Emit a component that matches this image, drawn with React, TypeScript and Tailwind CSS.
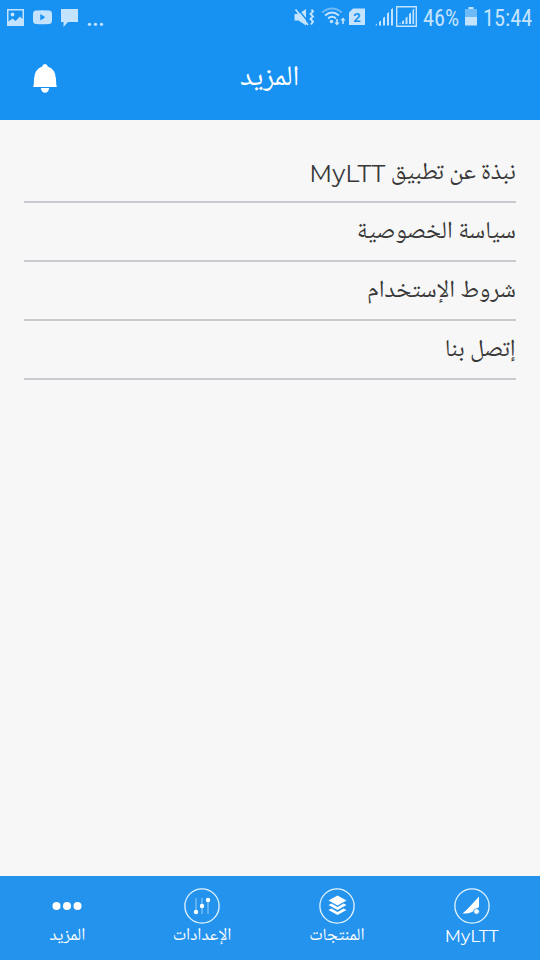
import React from "react";

const arabic = "font-['Noto_Naskh_Arabic_UI','Noto_Naskh_Arabic','DejaVu_Sans',sans-serif]";
const latin = "font-['Montserrat','Inter',sans-serif]";

function StatusBar() {
  return (
    <div dir="ltr" className="flex h-9 items-start text-[#c3e3ff]">
      <svg className="h-9 w-[110px]" viewBox="0 0 110 36" fill="currentColor">
        <path fillRule="evenodd" d="M7 9h17v17H7zM8.500 10.500v11l4-3 3 2.500 4.500-4.500 2.500 2.500v-8.500z" />
        <circle cx="12.5" cy="14.5" r="1.9" />
        <path fillRule="evenodd" d="M36 10.500Q42.500 9.800 49 10.500 52 10.800 52 14v6.500Q52 23.700 49 24 42.500 24.500 36 24 33 23.700 33 20.500V14Q33 10.800 36 10.500zM40.300 14v6.500l5-3.250z" />
        <path d="M61 9h17v13H68l-4.500 5v-5H61z" />
        <circle cx="89.500" cy="24.300" r="1.600" />
        <circle cx="95.500" cy="24.300" r="1.600" />
        <circle cx="101.500" cy="24.300" r="1.600" />
      </svg>
      <svg className="ml-[180px] h-9 w-[130px]" viewBox="290 0 130 36" fill="currentColor">
        <path d="M294.500 14h4l7.500-5v16.500l-7.500-5h-4z" />
        <path d="M297.500 8.500l12 15" stroke="#1791f2" strokeWidth="1.400" />
        <path d="M295.500 9.500l12.500 15.500" fill="none" stroke="currentColor" strokeWidth="1.800" />
        <path d="M311.500 9.500l1.500 2-2.500 2.500 2.500 2.500-2.500 2.500 2.500 2.500-2 3" fill="none" stroke="currentColor" strokeWidth="1.900" />
        <g fill="none" stroke="currentColor" strokeWidth="2">
          <path d="M322 12.500Q332 4.500 342 12.500" opacity=".5" />
          <path d="M325 15.500Q332 9.500 339 15.500M328 18.500Q332 15 336 18.500" />
        </g>
        <circle cx="331.500" cy="21.500" r="1.700" />
        <path d="M336.200 19h1.600v3.500h1.900L337 25.500l-2.700-3h1.900zM342.200 24h1.600v-3.500h1.900L343 17.500l-2.700 3h1.900z" />
        <path d="M353 8.500h12V25h-16V12.500z" />
        <text x="357" y="21.700" textAnchor="middle" className="fill-[#1791f2] font-['Roboto'] text-[13px] font-bold">2</text>
        <path d="M375 25.500l2-1.800v1.800zM379 22l2-1.500v5h-2zM383 18l2-1.500v9h-2zM387 13.500l2-1.500v13.500H387zM391 9.500l2-1.500v17.500H391z" />
        <path d="M396.700 6.700h19.600v19.600h-19.600z" fill="none" stroke="currentColor" strokeWidth="1.400" />
        <path d="M399 24l1.500-1.500V24zM402 21.500l2-1.500v4h-2zM405.500 18l2-1.500V24h-2zM409 14l2-1.500V24H409zM412.500 10l1.600-1.500V24h-1.600z" />
      </svg>
      <span className="ml-[3px] mt-1 w-[37px] whitespace-nowrap font-['Roboto_Condensed','Roboto',sans-serif] text-[24px] leading-7"><span className="inline-block origin-left scale-x-[0.93]">46%</span></span>
      <svg className="ml-1 h-9 w-[15px]" viewBox="464 0 15 36" fill="currentColor">
        <path d="M468.500 7h5v2h-5z" /><path d="M465 9h12v8h-12z" opacity=".5" /><path d="M465 17h12v8.500h-12z" />
      </svg>
      <span className="ml-1 mt-1 w-[52px] whitespace-nowrap font-['Roboto_Condensed','Roboto',sans-serif] text-[24px] leading-7"><span className="inline-block origin-left scale-x-[0.93]">15:44</span></span>
    </div>
  );
}

function Row({ children }: { children: React.ReactNode }) {
  return <li className={`flex h-[59px] items-center border-b-2 border-[#c7cace] text-[24.2px] leading-9 text-[#383838] ${arabic}`}>{children}</li>;
}

function Tab({ icon, children }: { icon: React.ReactNode; children: React.ReactNode }) {
  return (
    <div className="flex flex-1 flex-col items-center pt-[11px]">
      <svg className="size-[38px]" viewBox="-19 -19 38 38" fill="white">{icon}</svg>
      <span className={`-mt-px whitespace-nowrap text-[17.3px] leading-6 ${arabic}`}>{children}</span>
    </div>
  );
}

const ring = <circle r="17.100" fill="none" stroke="#e3f4ff" strokeWidth="1.300" />;

export default function App() {
  return (
    <div dir="rtl" className="flex h-[960px] w-[540px] flex-col overflow-hidden bg-[#f7f7f7]">
      <header className="h-[120px] bg-[#1791f2] text-white">
        <StatusBar />
        <div dir="ltr" className="flex h-[84px] items-center">
          <svg className="ml-[33px] h-[30px] w-6" viewBox="33 63 24 30" fill="white">
            <path d="M45 64a2.800 2.800 0 0 1 2.800 2.500Q55.500 69 56 79q0 5 .8 8H33.200q.8-3 .8-8Q34.500 69 42.200 66.500A2.800 2.800 0 0 1 45 64zM40.800 88h8.400q-.7 4.700-4.200 4.700T40.800 88z" />
          </svg>
          <h1 dir="rtl" className={`ml-[183px] whitespace-nowrap pt-px text-[28.5px] ${arabic}`}>المزيد</h1>
        </div>
      </header>
      <main className="flex-1 px-6 pt-6">
        <ul>
          <Row><span className="pt-0.5">نبذة عن تطبيق <span className={`text-[24px] ${latin}`}>MyLTT</span></span></Row>
          <Row><span>سياسة الخصوصية</span></Row>
          <Row><span>شروط الإستخدام</span></Row>
          <Row><span>إتصل بنا</span></Row>
        </ul>
      </main>
      <nav className="flex h-[84px] bg-[#2393ed] pr-px text-white">
        <Tab icon={<>{ring}<path d="M-9.500 7.500Q-5 4 7-9.500V1L0 6Q-4 8-9.500 7.500z" /><circle cx="4.500" cy="5.500" r="2.800" stroke="#2393ed" strokeWidth=".8" /></>}><span className={`text-[17px] ${latin}`}>MyLTT</span></Tab>
        <Tab icon={<>{ring}<path d="M0.500-10.500L9.500-5.500 0.500-.5-8.500-5.500z" /><path d="M-8.500-1l3-1.500 6 3.500 6-3.500 3 1.500-9 5zM-8.500 4l3-1.500 6 3.500 6-3.500 3 1.500-9 5z" /></>}>المنتجات</Tab>
        <Tab icon={<>{ring}<path d="M-6-8V8M0-8V8M6-8V8" stroke="#9bd0fa" strokeWidth="1" /><circle cx="-6" cy="6" r="2.200" /><circle r="2.200" /><circle cx="6" cy="-6" r="2.200" /></>}>الإعدادات</Tab>
        <Tab icon={<><circle cx="-10.500" r="4" /><circle r="4" /><circle cx="10.500" r="4" /></>}>المزيد</Tab>
      </nav>
    </div>
  );
}
